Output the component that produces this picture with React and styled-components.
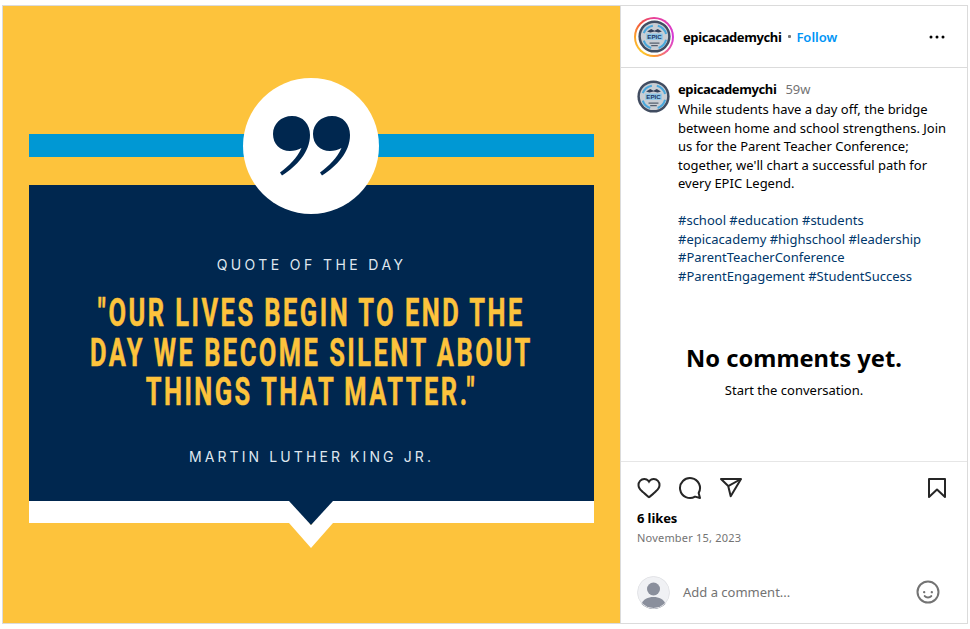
import React from 'react';
import styled, { createGlobalStyle } from 'styled-components';

const GlobalStyle = createGlobalStyle`
  html, body {
    margin: 0;
    padding: 0;
    background: #fff;
  }
  body {
    font-family: 'Noto Sans', 'Open Sans', sans-serif;
    color: #000;
  }
`;

const Post = styled.div`
  display: flex;
  box-sizing: border-box;
  width: 966px;
  height: 619px;
  margin: 5px 0 0 2px;
  border: 1px solid #dbdbdb;
  overflow: hidden;
`;

const Poster = styled.div`
  position: relative;
  flex: 0 0 617px;
  min-width: 0;
  box-sizing: border-box;
  display: flex;
  flex-direction: column;
  padding: 128px 26px 0;
  background: #fdc33c;
`;

const BlueBar = styled.div`
  height: 23px;
  margin-bottom: 28px;
  background: #0098d4;
`;

const QuoteCircle = styled.div`
  position: absolute;
  left: 240px;
  top: 72px;
  width: 136px;
  height: 136px;
  display: flex;
  align-items: center;
  justify-content: center;
  border-radius: 50%;
  background: #fff;
`;

const NavyBox = styled.div`
  height: 316px;
  box-sizing: border-box;
  display: flex;
  flex-direction: column;
  align-items: center;
  padding-top: 71px;
  background: #00274f;
`;

const WhiteStrip = styled.div`
  height: 22px;
  background: #fff;
`;

const Notch = styled.svg`
  position: absolute;
  left: 286px;
  top: 495px;
`;

const SmallCaps = styled.div`
  font-family: 'Inter', 'Lato', sans-serif;
  font-size: 14px;
  line-height: 18px;
  letter-spacing: ${({ $spacing }) => $spacing}px;
  color: #dfe6ee;
  white-space: nowrap;
`;

const QuoteWrap = styled.div`
  width: 100%;
  margin: 20px 0 35px;
  display: flex;
  justify-content: center;
`;

const QuoteText = styled.div`
  flex: none;
  font-family: 'Roboto', sans-serif;
  font-weight: 700;
  font-size: 38px;
  line-height: 39.5px;
  letter-spacing: 3.7px;
  color: #fdc33c;
  -webkit-text-stroke: 0.5px #fdc33c;
  text-align: center;
  white-space: nowrap;
  transform: scaleX(0.67);
`;

const Side = styled.div`
  flex: 1;
  min-width: 0;
  display: flex;
  flex-direction: column;
  border-left: 1px solid #dbdbdb;
  background: #fff;
`;

const Header = styled.header`
  flex: 0 0 62px;
  display: flex;
  align-items: center;
  box-sizing: border-box;
  padding: 0 18px 0 13px;
  border-bottom: 1px solid #dbdbdb;
`;

const Ring = styled.div`
  width: 40px;
  height: 40px;
  display: flex;
  align-items: center;
  justify-content: center;
  margin-right: 9px;
  border-radius: 50%;
  background: conic-gradient(#e8409a, #d63ad8 25%, #ee5f9a 38%, #fd9a2a 50%, #fdc82f 60%, #fca02c 76%, #f0503f 88%, #e8409a);
`;

const RingGap = styled.div`
  width: 36px;
  height: 36px;
  display: flex;
  align-items: center;
  justify-content: center;
  border-radius: 50%;
  background: #fff;
`;

const UserName = styled.span`
  font-size: 13px;
  font-weight: 700;
  line-height: 18px;
  letter-spacing: -0.4px;
`;

const Dot = styled.span`
  width: 3px;
  height: 3px;
  margin: 0 5px 0 7px;
  background: #737373;
  border-radius: 1px;
`;

const FollowLink = styled.span`
  font-size: 13px;
  font-weight: 600;
  color: #0095f6;
`;

const More = styled.svg`
  margin-left: auto;
`;

const Body = styled.div`
  flex: 1;
  min-height: 0;
  padding: 12px 16px 0;
`;

const CaptionRow = styled.div`
  display: flex;
  gap: 8px;
`;

const CaptionText = styled.div`
  flex: 1;
  font-size: 13px;
  line-height: 18.5px;
`;

const CaptionHead = styled.div`
  display: flex;
  gap: 9px;
  margin-bottom: 1.500px;
`;

const Age = styled.span`
  color: #737373;
`;

const Tags = styled.div`
  margin-top: 18.5px;
  color: #00376b;
`;

const Empty = styled.div`
  display: flex;
  flex-direction: column;
  align-items: center;
  margin-top: 57px;
`;

const EmptyTitle = styled.div`
  font-size: 23.700px;
  font-weight: 700;
  line-height: 32px;
`;

const EmptyHint = styled.div`
  margin-top: 7px;
  font-size: 13px;
  line-height: 18px;
`;

const Actions = styled.div`
  flex: 0 0 114px;
  box-sizing: border-box;
  padding: 14px 16px 0;
  border-top: 1px solid #e6e6e6;
`;

const IconRow = styled.div`
  display: flex;
  align-items: center;
  gap: 17px;
`;

const Bookmark = styled.svg`
  margin-left: auto;
  margin-right: 2px;
`;

const Likes = styled.div`
  margin-top: 9px;
  font-size: 13px;
  font-weight: 700;
  line-height: 18px;
  letter-spacing: -0.1px;
`;

const DateLine = styled.div`
  margin-top: 3px;
  font-size: 11px;
  line-height: 16px;
  letter-spacing: 0.2px;
  color: #737373;
`;

const CommentBar = styled.div`
  flex: 0 0 48px;
  display: flex;
  align-items: center;
  box-sizing: border-box;
  padding: 0 27px 14px 16px;
`;

const Placeholder = styled.span`
  margin-left: 13px;
  font-size: 13px;
  color: #737373;
`;

const Smile = styled.svg`
  margin-left: auto;
  fill: #737373;
`;

const Guest = styled.svg`
  border-radius: 50%;
`;

const Logo = ({ size }) => (
  <svg width={size} height={size} viewBox="0 0 40 40">
    <circle cx="20" cy="20" r="19.5" fill="#414c60" />
    <circle cx="20" cy="20" r="16.5" fill="#c9ced4" />
    <path d="M7 16a14 14 0 0 1 11-9M24 7a14 14 0 0 1 10 10M34 24a14 14 0 0 1-9 10M16 34A14 14 0 0 1 7 25" fill="none" stroke="#4aa8dc" strokeWidth="2.5" />
    <path d="M11 14l5-3 4 2 4-2 5 3-4 1-5-1-5 1z" fill="#33415a" />
    <rect x="10" y="16.500" width="20" height="7.500" fill="#8cc6e8" />
    <text x="20" y="23" textAnchor="middle" fontFamily="Liberation Sans" fontWeight="700" fontSize="7.5" fill="#1f3560">EPIC</text>
    <path d="M14 28h12M16 31h8" stroke="#55606f" strokeWidth="1.5" />
  </svg>
);

const Comma = ({ x }) => (
  <path
    transform={`translate(${x} 0)`}
    d="M19 0C30 0 37 8 37 19 37 36 24 50 9 59.500L7 56.500C16 50 24 42 28.500 32 25 34 21 35 17 35 7 35 0 28 0 18 0 8 8 0 19 0Z"
    fill="#00274f"
  />
);

const App = () => (
  <>
    <GlobalStyle />
    <Post>
      <Poster>
        <BlueBar />
        <NavyBox>
          <SmallCaps $spacing={3.4}>QUOTE OF THE DAY</SmallCaps>
          <QuoteWrap>
            <QuoteText>
              "OUR LIVES BEGIN TO END THE
              <br />
              DAY WE BECOME SILENT ABOUT
              <br />
              THINGS THAT MATTER."
            </QuoteText>
          </QuoteWrap>
          <SmallCaps $spacing={3.1}>MARTIN LUTHER KING JR.</SmallCaps>
        </NavyBox>
        <WhiteStrip />
        <QuoteCircle>
          <svg width="77" height="60" viewBox="0 0 77 60">
            <Comma x={0} />
            <Comma x={40} />
          </svg>
        </QuoteCircle>
        <Notch width="44" height="47" viewBox="0 0 44 47">
          <path d="M0 22L22 47 44 22V0L22 24 0 0Z" fill="#fff" />
          <path d="M0 0H44L22 24Z" fill="#00274f" />
        </Notch>
      </Poster>
      <Side>
        <Header>
          <Ring>
            <RingGap>
              <Logo size={33} />
            </RingGap>
          </Ring>
          <UserName>epicacademychi</UserName>
          <Dot />
          <FollowLink>Follow</FollowLink>
          <More width="24" height="24" viewBox="0 0 24 24" fill="#000">
            <circle cx="12" cy="12" r="1.500" />
            <circle cx="6" cy="12" r="1.500" />
            <circle cx="18" cy="12" r="1.500" />
          </More>
        </Header>
        <Body>
          <CaptionRow>
            <Logo size={33} />
            <CaptionText>
              <CaptionHead>
                <UserName>epicacademychi</UserName>
                <Age>59w</Age>
              </CaptionHead>
              While students have a day off, the bridge between home and school strengthens. Join us for the Parent Teacher Conference; together, we'll chart a successful path for every EPIC Legend.
              <Tags>
                #school #education #students #epicacademy #highschool #leadership #ParentTeacherConference #ParentEngagement #StudentSuccess
              </Tags>
            </CaptionText>
          </CaptionRow>
          <Empty>
            <EmptyTitle>No comments yet.</EmptyTitle>
            <EmptyHint>Start the conversation.</EmptyHint>
          </Empty>
        </Body>
        <Actions>
          <IconRow>
            <svg width="24" height="24" viewBox="0 0 24 24" fill="#262626">
              <path d="M16.792 3.904A4.989 4.989 0 0 1 21.5 9.122c0 3.072-2.652 4.959-5.197 7.222-2.512 2.243-3.865 3.469-4.303 3.752-.477-.309-2.143-1.823-4.303-3.752C5.141 14.072 2.5 12.167 2.5 9.122a4.989 4.989 0 0 1 4.708-5.218 4.21 4.21 0 0 1 3.675 1.941c.84 1.175.98 1.763 1.12 1.763s.278-.588 1.11-1.766a4.17 4.17 0 0 1 3.679-1.938m0-2a6.04 6.04 0 0 0-4.797 2.127 6.052 6.052 0 0 0-4.787-2.127A6.985 6.985 0 0 0 .5 9.122c0 3.61 2.55 5.827 5.015 7.97.283.246.569.494.853.747l1.027.918a44.998 44.998 0 0 0 3.518 3.018 2 2 0 0 0 2.174 0 45.263 45.263 0 0 0 3.626-3.115l.922-.824c.293-.26.59-.519.885-.774 2.334-2.025 4.98-4.32 4.98-7.94a6.985 6.985 0 0 0-6.708-7.218Z" />
            </svg>
            <svg width="24" height="24" viewBox="0 0 24 24" fill="none" stroke="#262626" strokeWidth="2" strokeLinejoin="round">
              <path d="M20.656 17.008a9.993 9.993 0 1 0-3.59 3.615L22 22Z" />
            </svg>
            <svg width="24" height="24" viewBox="0 0 24 24" fill="none" stroke="#262626" strokeWidth="2" strokeLinejoin="round">
              <line x1="22" y1="3" x2="9.218" y2="10.083" />
              <polygon points="11.698 20.334 22 3.001 2 3.001 9.218 10.084 11.698 20.334" />
            </svg>
            <Bookmark width="24" height="24" viewBox="0 0 24 24" fill="none" stroke="#262626" strokeWidth="2" strokeLinecap="round" strokeLinejoin="round">
              <polygon points="20 21 12 13.44 4 21 4 3 20 3 20 21" />
            </Bookmark>
          </IconRow>
          <Likes>6 likes</Likes>
          <DateLine>November 15, 2023</DateLine>
        </Actions>
        <CommentBar>
          <Guest width="33" height="33" viewBox="0 0 33 33">
            <circle cx="16.500" cy="16.500" r="16.500" fill="#f0f1f4" />
            <circle cx="16.500" cy="13" r="6.500" fill="#8a8f9c" />
            <path d="M4 29c2-6 7-8 12.500-8S27 23 29 29a16.500 16.500 0 0 1-25 0Z" fill="#8a8f9c" />
            <circle cx="16.500" cy="16.500" r="16" fill="none" stroke="#e2e3e6" />
          </Guest>
          <Placeholder>Add a comment...</Placeholder>
          <Smile width="24" height="24" viewBox="0 0 24 24">
            <path d="M15.830 10.997a1.167 1.167 0 1 0 1.167 1.167 1.167 1.167 0 0 0-1.167-1.167Zm-6.500 1.167a1.167 1.167 0 1 0-1.166 1.167 1.167 1.167 0 0 0 1.166-1.167Zm5.163 3.240a3.406 3.406 0 0 1-4.982.007 1 1 0 1 0-1.557 1.256 5.397 5.397 0 0 0 8.090 0 1 1 0 0 0-1.550-1.263ZM12 .503a11.500 11.500 0 1 0 11.500 11.500A11.513 11.513 0 0 0 12 .503Zm0 21a9.500 9.500 0 1 1 9.500-9.500 9.510 9.510 0 0 1-9.500 9.500Z" />
          </Smile>
        </CommentBar>
      </Side>
    </Post>
  </>
);

export default App;
